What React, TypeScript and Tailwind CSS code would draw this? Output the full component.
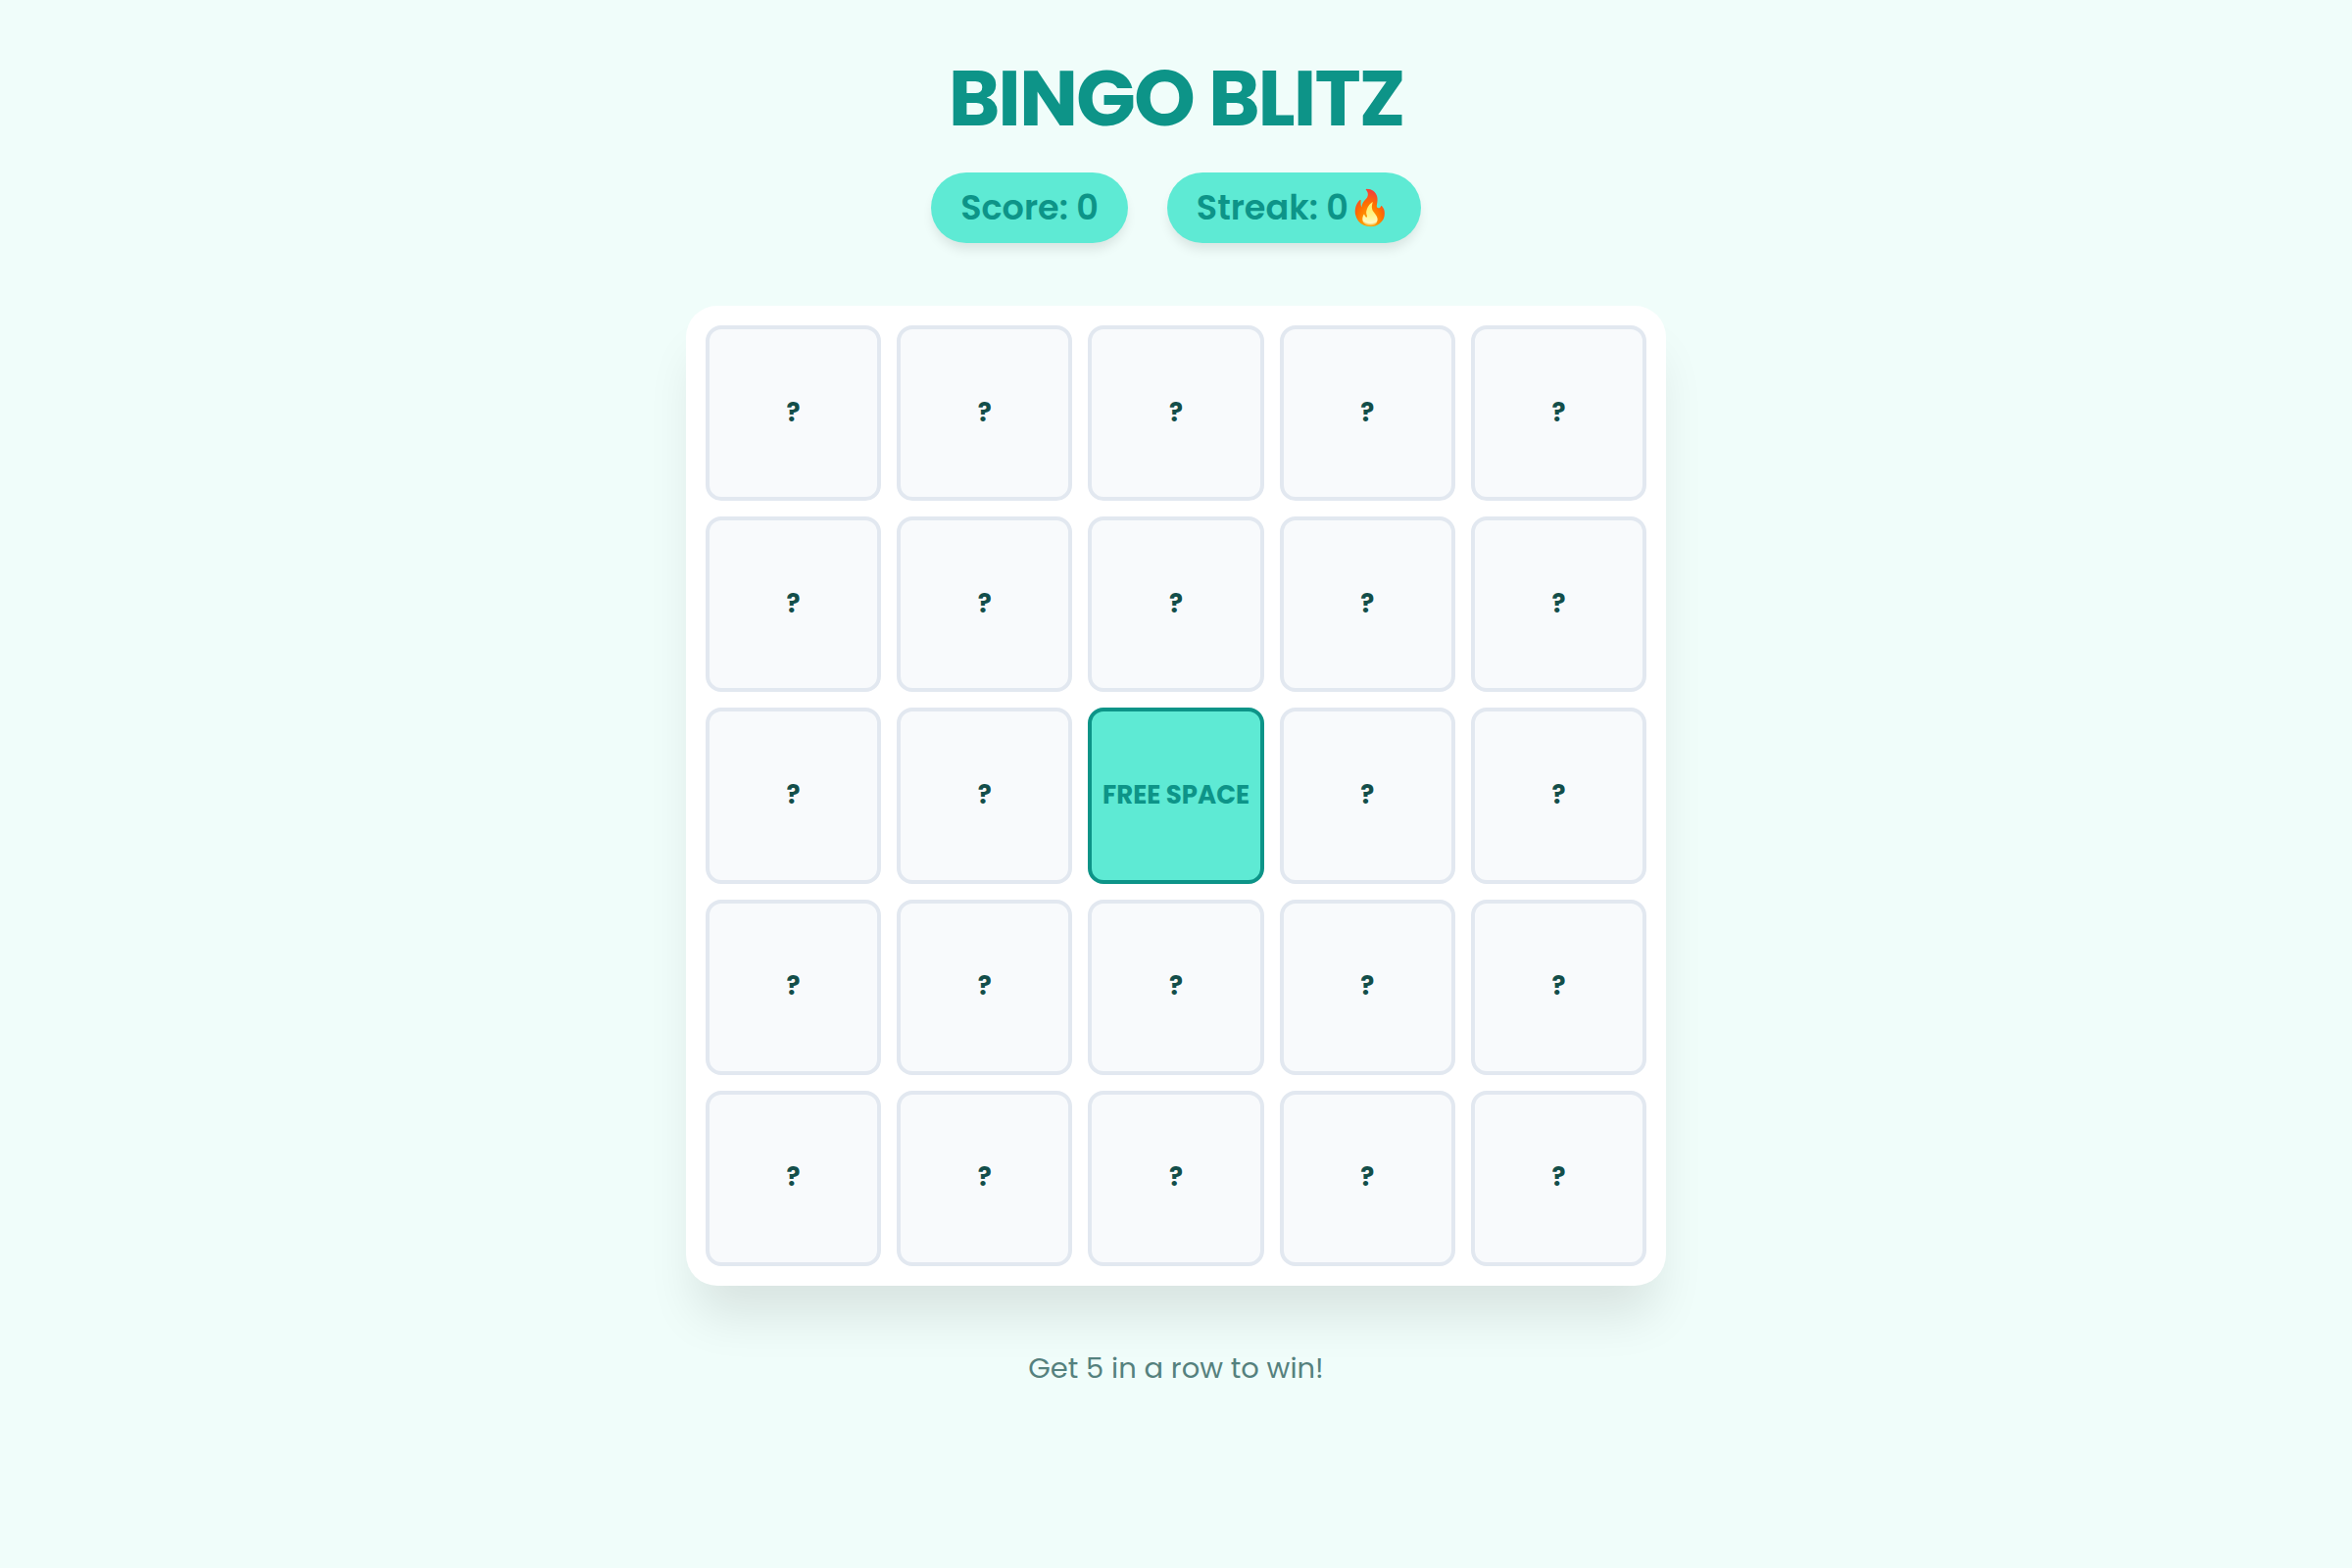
import { useState } from "react";
import clsx from "clsx";

const SIZE = 5;
const FREE = 12;

function App() {
  const [marked, setMarked] = useState<number[]>([FREE]);

  const toggle = (i: number) => {
    if (i === FREE) return;
    setMarked((prev) => (prev.includes(i) ? prev.filter((n) => n !== i) : [...prev, i]));
  };

  return (
    <main className="min-h-screen bg-[#f0fdfa] px-10 pt-14 pb-10 flex flex-col items-center text-[#134e4a] font-['Poppins','Inter',sans-serif]">
      <h1 className="text-[80px] leading-[88px] font-bold tracking-tight text-[#0d9488] text-center">
        BINGO BLITZ
      </h1>

      <div className="mt-8 flex flex-wrap justify-center gap-10">
        <Stat>Score: 0</Stat>
        <Stat>Streak: 0🔥</Stat>
      </div>

      <section
        aria-label="Bingo board"
        className="mt-16 w-full max-w-[1000px] aspect-square grid grid-cols-5 gap-4 p-5 bg-white rounded-[32px] shadow-[0_40px_50px_-10px_rgba(0,0,0,0.1)]"
      >
        {Array.from({ length: SIZE * SIZE }, (_, i) => (
          <Cell key={i} free={i === FREE} marked={marked.includes(i)} onClick={() => toggle(i)} />
        ))}
      </section>

      <p className="mt-16 text-[29px] leading-10 opacity-70">Get 5 in a row to win!</p>
    </main>
  );
}

function Stat({ children }: { children: React.ReactNode }) {
  return (
    <div className="h-18 px-[30px] flex items-center rounded-full bg-[#5eead4] text-[#0d9488] text-[35px] leading-10 font-semibold shadow-[0_8px_12px_-2px_rgba(0,0,0,0.1)]">
      {children}
    </div>
  );
}

function Cell({
  free,
  marked,
  onClick,
}: {
  free: boolean;
  marked: boolean;
  onClick: () => void;
}) {
  return (
    <button
      type="button"
      aria-pressed={marked}
      onClick={onClick}
      className={clsx(
        "min-w-0 aspect-square pb-0.5 flex items-center justify-center rounded-2xl border-4 text-[26px] leading-8 font-bold",
        marked
          ? "bg-[#5eead4] border-[#0d9488] text-[#0d9488]"
          : "bg-[#f8fafc] border-[#e2e8f0] text-[#134e4a]",
      )}
    >
      {free ? "FREE SPACE" : "?"}
    </button>
  );
}

export default App;
